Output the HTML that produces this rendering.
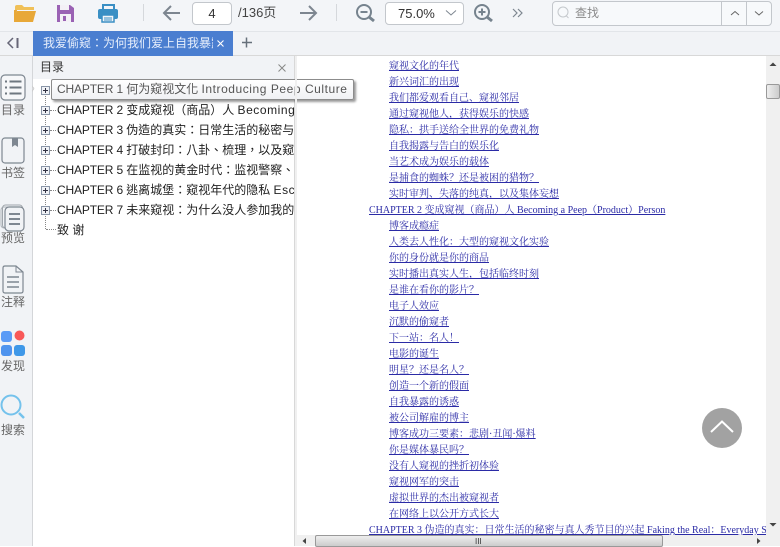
<!DOCTYPE html>
<html><head><meta charset="utf-8">
<style>
html,body{margin:0;padding:0}
body{width:780px;height:546px;overflow:hidden;position:relative;background:#fff;font-family:"Liberation Sans","Noto Sans CJK SC",sans-serif;color:#333}
.a{position:absolute}
.top{left:0;top:0;width:780px;height:31px;background:#f3f5f8;border-bottom:1px solid #e2e5e9}
.bar2{left:0;top:32px;width:780px;height:23px;background:#f1f3f6;border-bottom:1px solid #d8d8d8}
.side{left:0;top:56px;width:32px;height:490px;background:#f1f3f6;border-right:1px solid #d4d6d9}
.toc{left:33px;top:56px;width:261px;height:490px;background:#fff;border-right:1px solid #d8d8d8;overflow:hidden}
.tochead{left:33px;top:56px;width:261px;height:23px;background:#f1f3f6}
.lbl{position:absolute;left:0;width:26px;text-align:center;font-size:12px;color:#666;line-height:14px}
.t{position:absolute;left:57px;font-size:12px;line-height:16px;color:#222;white-space:nowrap;width:237px;overflow:hidden}
.t,.tip,.tabt{font-family:"Liberation Sans","Noto Sans CJK TC",sans-serif}
.t i,.tip i{font-style:normal;letter-spacing:.55px}
.t b,.tip b{font-weight:normal;letter-spacing:-.15px}
.pb{position:absolute;left:41px;width:9px;height:9px;box-sizing:border-box;border:1px solid #8a96a8;background:#f0f2f6}
.pb:before{content:"";position:absolute;left:1px;top:3px;width:5px;height:1px;background:#334}
.pb:after{content:"";position:absolute;left:3px;top:1px;width:1px;height:5px;background:#334}
.dh{position:absolute;left:50px;width:6px;border-top:1px dotted #888}
.l{position:absolute;font-family:"Liberation Serif","Noto Serif CJK SC",serif;font-size:10px;line-height:16px;color:#2b2ba6;text-decoration:underline;white-space:nowrap}
.l1{left:389px}.l0{left:369px}
</style></head><body>
<div class="a top"></div>
<div class="a" style="left:192px;top:2px;width:38px;height:21px;border:1px solid #c3c7cc;border-radius:4px;background:#fff;text-align:center;font-size:13px;line-height:21px;color:#333">4</div>
<div class="a" style="left:238px;top:5px;font-size:13px;line-height:16px;color:#444">/136页</div>
<div class="a" style="left:385px;top:2px;width:77px;height:21px;border:1px solid #c3c7cc;border-radius:4px;font-size:13px;line-height:21px;color:#333;text-indent:12px;background:#fff">75.0%</div>
<div class="a" style="left:552px;top:1px;width:218px;height:23px;border:1px solid #c3c7cc;border-radius:4px;background:#f7f9fb"></div>
<div class="a" style="left:721px;top:2px;width:1px;height:23px;background:#c3c7cc"></div>
<div class="a" style="left:746px;top:2px;width:1px;height:23px;background:#c3c7cc"></div>
<div class="a" style="left:575px;top:5px;font-size:12px;line-height:16px;color:#8a8a8a">查找</div>
<svg class="a" style="left:0;top:0;z-index:2" width="780" height="32" fill="none">
<path d="M15 10 V7 q0-2 2-2 h5 l2 2 h10 v3z" fill="#f0c058"/><path d="M14 22 l3-11 h19 l-3 11z" fill="#e8a838"/><path d="M14 10 h3 l-1 12 h-2z" fill="#e8a838"/>
<path d="M57 5 h13 l4 3 v14 h-17z" fill="#9a62b4"/><rect x="60" y="5" width="9" height="5" fill="#f3f0f6"/><rect x="60" y="14" width="11" height="8" fill="#f3f0f6"/><rect x="63" y="16" width="3" height="5" fill="#9a62b4"/>
<path d="M103 9 V5 h11 v4" stroke="#3a8fc4" stroke-width="2"/><rect x="98" y="9" width="20" height="10" rx="2" fill="#3a8fc4"/><rect x="102" y="15" width="12" height="7" fill="#f3f5f8" stroke="#3a8fc4" stroke-width="1.500"/><path d="M104 18h8M104 20h8" stroke="#3a8fc4"/>
<path d="M143.500 4 v17" stroke="#d5d8dc"/>
<path d="M180 13 h-16 M171 6 l-7 7 7 7" stroke="#7d8690" stroke-width="2"/>
<path d="M300 13 h16 M309 6 l7 7 -7 7" stroke="#7d8690" stroke-width="2"/>
<path d="M336.500 4 v17" stroke="#d5d8dc"/>
<circle cx="364" cy="12" r="7" stroke="#76838e" stroke-width="2"/><path d="M360.500 12h7" stroke="#76838e" stroke-width="2"/><path d="M369 17 l5 4" stroke="#76838e" stroke-width="3"/>
<circle cx="482" cy="12" r="7" stroke="#76838e" stroke-width="2"/><path d="M478.500 12h7M482 8.500v7" stroke="#76838e" stroke-width="2"/><path d="M487 17 l5 4" stroke="#76838e" stroke-width="3"/>
<path d="M513 9 l4 4 -4 4 M518 9 l4 4 -4 4" stroke="#7d8690" stroke-width="1.200"/>
<path d="M446 10.500 l5 4.500 5-4.500" stroke="#7d8690" stroke-width="1"/>
<circle cx="563" cy="12" r="5" stroke="#c4c8cc"/><path d="M566.500 16 l2 2" stroke="#c4c8cc"/>
<path d="M731 15 l4-3.500 4 3.500" stroke="#666" stroke-width="1"/>
<path d="M755 11.500 l4 3.500 4-3.500" stroke="#666" stroke-width="1"/>
</svg>

<div class="a bar2"></div>
<svg class="a" style="left:0;top:32px" width="33" height="23" fill="none"><path d="M13 6 l-5 5 5 5" stroke="#667" stroke-width="1.500"/><path d="M17.500 6 v10" stroke="#667" stroke-width="2"/></svg>
<div class="a" style="left:33px;top:31px;width:200px;height:25px;background:#4a7ed0;overflow:hidden">
<div class="a tabt" style="left:10px;top:4px;width:170px;overflow:hidden;white-space:nowrap;font-size:12px;line-height:16px;color:#e6eefb">我爱偷窥：为何我们爱上自我暴露</div>
<svg class="a" style="left:183px;top:8px" width="10" height="10"><path d="M1.500 1.500 l6 6 M7.500 1.500 l-6 6" stroke="#fff" stroke-width="1.100"/></svg>
</div>
<svg class="a" style="left:241px;top:37px" width="12" height="12"><path d="M1 5.500 h10 M5.500 0.500 v10" stroke="#66707a" stroke-width="1.500"/></svg>

<div class="a side"></div>
<div class="a toc"></div>
<div class="a tochead"></div>
<div class="a" style="left:40px;top:59px;font-size:12px;line-height:16px;color:#333">目录</div>
<svg class="a" style="left:278px;top:64px" width="8" height="8"><path d="M.500.500 l7 7 M7.500.500 l-7 7" stroke="#888"/></svg>

<svg class="a" style="left:0;top:72px" width="36" height="380" fill="none">
<rect x="1" y="3" width="24" height="25" rx="4" stroke="#7e8791" stroke-width="1.200" fill="#f6f7f9"/>
<path d="M5 9.500h2M5 15.500h2M5 21.500h2M9.500 9.500h12M9.500 15.500h12M9.500 21.500h12" stroke="#6e7780" stroke-width="2"/>
<rect x="2" y="66" width="22" height="25" rx="3" stroke="#7e8791" stroke-width="1.200"/><path d="M12 66 v9 l3-2 3 2 v-9z" fill="#7e8791"/>
<rect x="1" y="135" width="19" height="21" rx="3" stroke="#b0b5bb"/><rect x="2.500" y="133" width="20" height="23" rx="3" stroke="#a0a6ac"/>
<rect x="5" y="135" width="19" height="24" rx="4" stroke="#7e8791" fill="#f1f3f6" stroke-width="1.200"/><path d="M9 142h11M9 147h11M9 152h11" stroke="#7e8791" stroke-width="2"/>
<path d="M3 196 q0-2 2-2 h11 l7 6 v19 q0 2-2 2 h-16 q-2 0-2-2z" stroke="#7e8791" stroke-width="1.200"/><path d="M16 194 v6 h7" stroke="#7e8791"/><path d="M7 205h12M7 210h12M7 215h12" stroke="#7e8791" stroke-width="1.500"/>
<rect x="1" y="259" width="11" height="11" rx="3" fill="#5b9bf6"/><circle cx="19.500" cy="263.500" r="5" fill="#f85858"/><rect x="1" y="273" width="11" height="11" rx="3" fill="#4f94ee"/><rect x="14" y="273" width="11" height="11" rx="3" fill="#3f98e8"/>
<circle cx="11" cy="333" r="9.500" stroke="#74c2ec" stroke-width="2"/><path d="M19 341 l5 5" stroke="#74c2ec" stroke-width="2.500"/>
</svg>
<div class="lbl" style="top:103px">目录</div>
<div class="lbl" style="top:166px">书签</div>
<div class="lbl" style="top:231px">预览</div>
<div class="lbl" style="top:295px">注释</div>
<div class="lbl" style="top:359px">发现</div>
<div class="lbl" style="top:423px">搜索</div>

<div class="a" style="left:45px;top:94px;width:0;height:135px;border-left:1px dotted #888"></div>
<div class="dh" style="top:229px;left:46px;width:10px"></div>
<div class="pb" style="top:86px"></div>
<div class="pb" style="top:106px"></div><div class="dh" style="top:110px"></div>
<div class="pb" style="top:126px"></div><div class="dh" style="top:130px"></div>
<div class="pb" style="top:146px"></div><div class="dh" style="top:150px"></div>
<div class="pb" style="top:166px"></div><div class="dh" style="top:170px"></div>
<div class="pb" style="top:186px"></div><div class="dh" style="top:190px"></div>
<div class="pb" style="top:206px"></div><div class="dh" style="top:210px"></div>
<div class="t" style="top:102px"><b>CHAPTER 2 </b>变成窥视（商品）人 <i>Becoming a Peep</i></div>
<div class="t" style="top:122px"><b>CHAPTER 3 </b>伪造的真实：日常生活的秘密与真人秀</div>
<div class="t" style="top:142px"><b>CHAPTER 4 </b>打破封印：八卦、梳理，以及窥视</div>
<div class="t" style="top:162px"><b>CHAPTER 5 </b>在监视的黄金时代：监视警察、</div>
<div class="t" style="top:182px"><b>CHAPTER 6 </b>逃离城堡：窥视年代的隐私 <i>Escape</i></div>
<div class="t" style="top:202px"><b>CHAPTER 7 </b>未来窥视：为什么没人参加我的派对</div>
<div class="t" style="top:222px">致 谢</div>

<svg class="a" style="left:32px;top:82px" width="20" height="16"><path d="M2 6.500 L-2 2 M2 6.500 L-2 12" stroke="#ccc"/></svg>
<div class="a tip" style="left:51px;top:79px;height:21px;border:1px solid #8c8c8c;border-radius:2px;box-shadow:2px 2px 2px rgba(0,0,0,.4);box-sizing:border-box;width:303px;font-size:12px;line-height:19px;color:#555;text-indent:5px;white-space:nowrap;overflow:hidden;background:linear-gradient(#fff,#f0f1f4)"><b>CHAPTER 1 </b>何为窥视文化 <i>Introducing Peep Culture</i></div>

<div class="l l1" style="top:59px">窥视文化的年代</div>
<div class="l l1" style="top:75px">新兴词汇的出现</div>
<div class="l l1" style="top:91px">我们都爱观看自己、窥视邻居</div>
<div class="l l1" style="top:107px">通过窥视他人，获得娱乐的快感</div>
<div class="l l1" style="top:123px">隐私：拱手送给全世界的免费礼物</div>
<div class="l l1" style="top:139px">自我揭露与告白的娱乐化</div>
<div class="l l1" style="top:155px">当艺术成为娱乐的载体</div>
<div class="l l1" style="top:171px">是捕食的蜘蛛？还是被困的猎物？</div>
<div class="l l1" style="top:187px">实时审判、失落的纯真，以及集体妄想</div>
<div class="l l0" style="top:203px">CHAPTER 2 变成窥视（商品）人 Becoming a Peep（Product）Person</div>
<div class="l l1" style="top:219px">博客成瘾症</div>
<div class="l l1" style="top:235px">人类去人性化：大型的窥视文化实验</div>
<div class="l l1" style="top:251px">你的身份就是你的商品</div>
<div class="l l1" style="top:267px">实时播出真实人生，包括临终时刻</div>
<div class="l l1" style="top:283px">是谁在看你的影片？</div>
<div class="l l1" style="top:299px">电子人效应</div>
<div class="l l1" style="top:315px">沉默的偷窥者</div>
<div class="l l1" style="top:331px">下一站：名人！</div>
<div class="l l1" style="top:347px">电影的诞生</div>
<div class="l l1" style="top:363px">明星？还是名人？</div>
<div class="l l1" style="top:379px">创造一个新的假面</div>
<div class="l l1" style="top:395px">自我暴露的诱惑</div>
<div class="l l1" style="top:411px">被公司解雇的博主</div>
<div class="l l1" style="top:427px">博客成功三要素：悲剧·丑闻·爆料</div>
<div class="l l1" style="top:443px">你是媒体暴民吗？</div>
<div class="l l1" style="top:459px">没有人窥视的挫折初体验</div>
<div class="l l1" style="top:475px">窥视网军的突击</div>
<div class="l l1" style="top:491px">虚拟世界的杰出被窥视者</div>
<div class="l l1" style="top:507px">在网络上以公开方式长大</div>
<div class="a" style="left:369px;top:523px;width:397px;height:12px;overflow:hidden"><div class="l" style="position:static">CHAPTER 3 伪造的真实：日常生活的秘密与真人秀节目的兴起 Faking the Real：Everyday Secrets</div></div>

<div class="a" style="left:295px;top:56px;width:2px;height:490px;background:#f0f0f0"></div>
<div class="a" style="left:766px;top:56px;width:14px;height:490px;background:#f0f0f0"></div>
<div class="a" style="left:766px;top:84px;width:14px;height:15px;box-sizing:border-box;border:1px solid #999;border-radius:2px;background:linear-gradient(90deg,#eee,#ccc)"></div>
<svg class="a" style="left:766px;top:60px" width="14" height="10"><path d="M3.500 6 L7 2.500 L10.500 6z" fill="#444"/></svg>
<svg class="a" style="left:766px;top:520px" width="14" height="10"><path d="M3.500 3 L7 6.500 L10.500 3z" fill="#444"/></svg>
<div class="a" style="left:297px;top:535px;width:469px;height:11px;background:#f0f0f0"></div>
<div class="a" style="left:315px;top:535px;width:348px;height:12px;box-sizing:border-box;border:1px solid #999;border-radius:2px;background:linear-gradient(#eee,#ccc)"></div>
<div class="a" style="left:475px;top:537px;font-size:8px;line-height:9px;color:#333">III</div>
<svg class="a" style="left:300px;top:536px" width="10" height="10"><path d="M6 2 L2.500 5 L6 8z" fill="#444"/></svg>
<svg class="a" style="left:754px;top:536px" width="10" height="10"><path d="M3 2 L6.500 5 L3 8z" fill="#444"/></svg>

<svg class="a" style="left:702px;top:408px" width="40" height="40" fill="none"><circle cx="20" cy="20" r="20" fill="#a2a2a2"/><path d="M9 24 L20 13.500 L31 24" stroke="#fff" stroke-width="2"/></svg>
</body></html>
